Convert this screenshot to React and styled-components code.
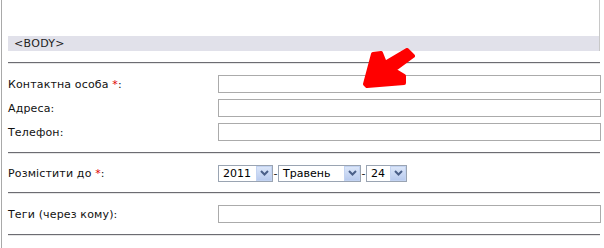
import React from "react";
import styled, { createGlobalStyle } from "styled-components";

const Global = createGlobalStyle`
  html, body { margin: 0; padding: 0; background: #fff; }
  body { font-family: "DejaVu Sans", Verdana, sans-serif; font-size: 11px; color: #000; }
`;

const Page = styled.div`
  padding-left: 1px;
  width: 604px;
  box-sizing: border-box;
`;

const Frame = styled.div`
  border-left: 1px solid #a9a9a9;
  padding: 0 3px 0 6px;
  height: 248px;
  overflow: hidden;
  box-sizing: border-box;
`;

const Editor = styled.div`
  border-right: 1px solid #c8c8c8;
  width: 592px;
  box-sizing: border-box;
`;

const EditArea = styled.div`
  height: 36px;
  background: #fff;
`;

const StatusBar = styled.div`
  height: 15px;
  background: #e1e1ea;
  display: flex;
  align-items: center;
  padding-left: 6px;
  font-size: 11px;
  color: #222;
  letter-spacing: 0.3px;
`;

const Spacer = styled.div`
  height: ${(p) => p.$h}px;
`;

const Separator = styled.div`
  width: 592px;
  height: 2px;
  border-top: 1px solid #6c6c72;
  border-bottom: 1px solid #e6e6e6;
  box-sizing: border-box;
`;

const Section = styled.div`
  padding: ${(p) => p.$pad}px 0;
  position: relative;
`;

const Row = styled.div`
  height: 24px;
  display: flex;
  align-items: center;
`;

const Label = styled.div`
  width: 210px;
  flex: none;
  color: #111;
  letter-spacing: 0.15px;
`;

const Req = styled.span`
  color: #e00000;
`;

const TextInput = styled.div`
  width: 383px;
  height: 18px;
  box-sizing: border-box;
  border: 1px solid #ababab;
  background: #fff;
`;

const DateGroup = styled.div`
  display: flex;
  align-items: center;
`;

const Dash = styled.span`
  width: 5px;
  text-align: center;
  font-size: 11px;
  color: #222;
`;

const Select = styled.div`
  width: ${(p) => p.$w}px;
  height: 17px;
  box-sizing: border-box;
  border: 1px solid #9aa4b2;
  background: #fff;
  display: flex;
  align-items: center;
  justify-content: space-between;
  padding-left: 4px;
  font-size: 11px;
  color: #000;
`;

const SelectBtn = styled.div`
  width: 16px;
  height: 15px;
  box-sizing: border-box;
  border: 1px solid #c3d3f1;
  background: linear-gradient(#dbe6f9, #b9cbee);
  display: flex;
  align-items: center;
  justify-content: center;
`;

const Arrow = styled.svg`
  position: absolute;
  left: 352px;
  top: -16px;
  pointer-events: none;
`;

function Dropdown({ value, w }) {
  return (
    <Select $w={w}>
      <span>{value}</span>
      <SelectBtn>
        <svg width="9" height="6" viewBox="0 0 9 6">
          <path d="M1 1 L4.5 4.5 L8 1" fill="none" stroke="#4a5f88" strokeWidth="2" />
        </svg>
      </SelectBtn>
    </Select>
  );
}

export default function App() {
  return (
    <Page>
      <Global />
      <Frame>
        <Editor>
          <EditArea />
          <StatusBar>&lt;BODY&gt;</StatusBar>
        </Editor>
        <Spacer $h={11} />
        <Separator />
        <Section $pad={8}>
          <Arrow width="60" height="42" viewBox="0 0 60 42">
            <path
              d="M5 36 L13 6 L21 5 L25 15 L47 2 L53 8 L34 22 L44 28 L44 35 L7 38 Z"
              fill="#ff0000"
              stroke="#ff0000"
              strokeWidth="4"
              strokeLinejoin="round"
            />
          </Arrow>
          <Row>
            <Label>
              Контактна особа <Req>*</Req>:
            </Label>
            <TextInput />
          </Row>
          <Row>
            <Label>Адреса:</Label>
            <TextInput />
          </Row>
          <Row>
            <Label>Телефон:</Label>
            <TextInput />
          </Row>
        </Section>
        <Separator />
        <Section $pad={7}>
          <Row>
            <Label>
              Розмістити до <Req>*</Req>:
            </Label>
            <DateGroup>
              <Dropdown value="2011" w={55} />
              <Dash>-</Dash>
              <Dropdown value="Травень" w={83} />
              <Dash>-</Dash>
              <Dropdown value="24" w={41} />
            </DateGroup>
          </Row>
        </Section>
        <Separator />
        <Section $pad={8}>
          <Row>
            <Label>Теги (через кому):</Label>
            <TextInput />
          </Row>
        </Section>
        <Separator />
      </Frame>
    </Page>
  );
}
